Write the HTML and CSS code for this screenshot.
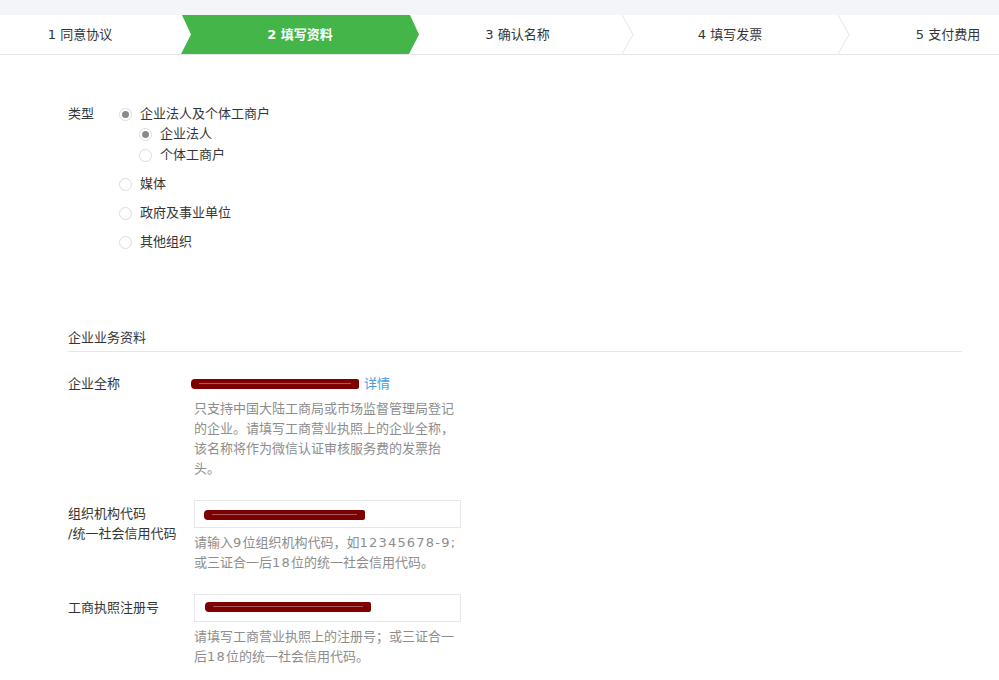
FILE: index.html
```html
<!DOCTYPE html>
<html lang="zh-CN">
<head>
<meta charset="utf-8">
<title>填写资料</title>
<link rel="stylesheet" href="styles.css">
</head>
<body>
<div class="topstrip"></div>
<div class="steps">
  <div class="step step-1">1 同意协议</div>
  <div class="step step-2 current">2 填写资料</div>
  <div class="step step-3">3 确认名称<svg class="chev" width="14" height="39" viewBox="0 0 14 39"><polyline points="1,0 12,19.5 1,39" fill="none" stroke="#e6e6e8" stroke-width="1"/></svg></div>
  <div class="step step-4">4 填写发票<svg class="chev" width="14" height="39" viewBox="0 0 14 39"><polyline points="1,0 12,19.5 1,39" fill="none" stroke="#e6e6e8" stroke-width="1"/></svg></div>
  <div class="step step-5">5 支付费用</div>
</div>

<div class="content">
  <div class="type-row">
    <div class="type-label">类型</div>
    <div class="type-options">
      <div class="opt"><span class="radio checked"></span>企业法人及个体工商户</div>
      <div class="sub-options">
        <div class="opt"><span class="radio checked"></span>企业法人</div>
        <div class="opt"><span class="radio"></span>个体工商户</div>
      </div>
      <div class="opt main"><span class="radio"></span>媒体</div>
      <div class="opt main"><span class="radio"></span>政府及事业单位</div>
      <div class="opt main"><span class="radio"></span>其他组织</div>
    </div>
  </div>

  <div class="section-title">企业业务资料</div>

  <div class="form-row">
    <div class="form-label">企业全称</div>
    <div class="form-value">
      <div class="value-line"><span class="redact redact-name"></span><a class="link" href="#">详情</a></div>
      <div class="desc">只支持中国大陆工商局或市场监督管理局登记的企业。请填写工商营业执照上的企业全称，该名称将作为微信认证审核服务费的发票抬头。</div>
    </div>
  </div>

  <div class="form-row">
    <div class="form-label input-label">组织机构代码<br>/统一社会信用代码</div>
    <div class="form-value">
      <div class="input"><span class="redact redact-code"></span></div>
      <div class="desc">请输入<span class="num">9</span>位组织机构代码，如<span class="num">12345678-9;</span><br>或三证合一后<span class="num">18</span>位的统一社会信用代码。</div>
    </div>
  </div>

  <div class="form-row">
    <div class="form-label input-label">工商执照注册号</div>
    <div class="form-value">
      <div class="input"><span class="redact redact-reg"></span></div>
      <div class="desc">请填写工商营业执照上的注册号；或三证合一后<span class="num">18</span>位的统一社会信用代码。</div>
    </div>
  </div>
</div>
</body>
</html>
```

FILE: styles.css
```css
* { box-sizing: border-box; }

html, body {
  margin: 0;
  padding: 0;
  background: #ffffff;
  overflow: hidden;
}

body {
  font-family: "DejaVu Sans", "Noto Sans CJK SC", sans-serif;
  font-size: 13px;
  color: #353535;
  width: 999px;
  height: 680px;
}

.topstrip {
  height: 15px;
  background: #f4f5f9;
}

.steps {
  display: flex;
  height: 40px;
  border-bottom: 1px solid #e7e7eb;
  overflow: hidden;
  white-space: nowrap;
}

.step {
  position: relative;
  flex: none;
  height: 39px;
  line-height: 39px;
  text-align: center;
  color: #353535;
}

.step-1 { width: 181px; padding-right: 21px; }
.step-2 {
  width: 238px;
  background: #44b549;
  color: #ffffff;
  font-weight: bold;
  clip-path: polygon(1px 0, 229px 0, 238px 50%, 228px 100%, 0 100%, 10px 50%);
}
.step-3 { width: 203px; padding-right: 6px; }
.step-4 { width: 216px; }
.step-5 { width: 220px; }

.chev {
  position: absolute;
  right: -13px;
  top: 0;
  display: block;
}

.content {
  padding: 49px 37px 0 68px;
}

.type-row {
  display: flex;
  line-height: 20px;
}

.type-label {
  width: 51px;
  flex: none;
}

.opt {
  display: flex;
  align-items: center;
  height: 20px;
}

.sub-options {
  padding-left: 20px;
  margin-bottom: 9px;
}

.sub-options .opt + .opt { margin-top: 1px; }

.opt.main + .opt.main { margin-top: 9px; }

.radio {
  width: 13px;
  height: 13px;
  border: 1px solid #dcdcdf;
  border-radius: 50%;
  margin-right: 8px;
  position: relative;
  flex: none;
  background: #fff;
}

.radio.checked::after {
  content: "";
  position: absolute;
  left: 2px;
  top: 2px;
  width: 7px;
  height: 7px;
  border-radius: 50%;
  background: #8a8a8a;
}

.section-title {
  margin-top: 76px;
  line-height: 20px;
  padding-bottom: 3px;
  border-bottom: 1px solid #e7e7eb;
}

.form-row {
  display: flex;
  margin-top: 22px;
  line-height: 20px;
}

.form-row + .form-row { margin-top: 21px; }

.form-label {
  width: 126px;
  flex: none;
}

.input-label { padding-top: 4px; }

.form-value {
  width: 267px;
  flex: none;
}

.value-line {
  display: flex;
  align-items: center;
  height: 20px;
}

.link {
  color: #459ae9;
  text-decoration: none;
  margin-left: 5px;
}

.desc {
  margin-top: 5px;
  color: #8d8d8d;
  line-height: 20px;
}

.num {
  letter-spacing: 1.2px;
}

.input {
  height: 28px;
  border: 1px solid #e7e7eb;
  display: flex;
  align-items: center;
  padding-left: 9px;
}

.redact {
  display: block;
  height: 10px;
  background: #7c0000;
  border-radius: 4px 2px 2px 4px;
  position: relative;
}

.redact::after {
  content: "";
  position: absolute;
  left: 8px;
  right: 8px;
  top: 4px;
  height: 1px;
  background: rgba(255, 255, 255, 0.35);
}

.redact-name { width: 168px; margin-left: -3px; }
.redact-code { width: 161px; margin-top: 2px; }
.redact-reg { width: 166px; margin-left: 1px; margin-top: -2px; }
```
